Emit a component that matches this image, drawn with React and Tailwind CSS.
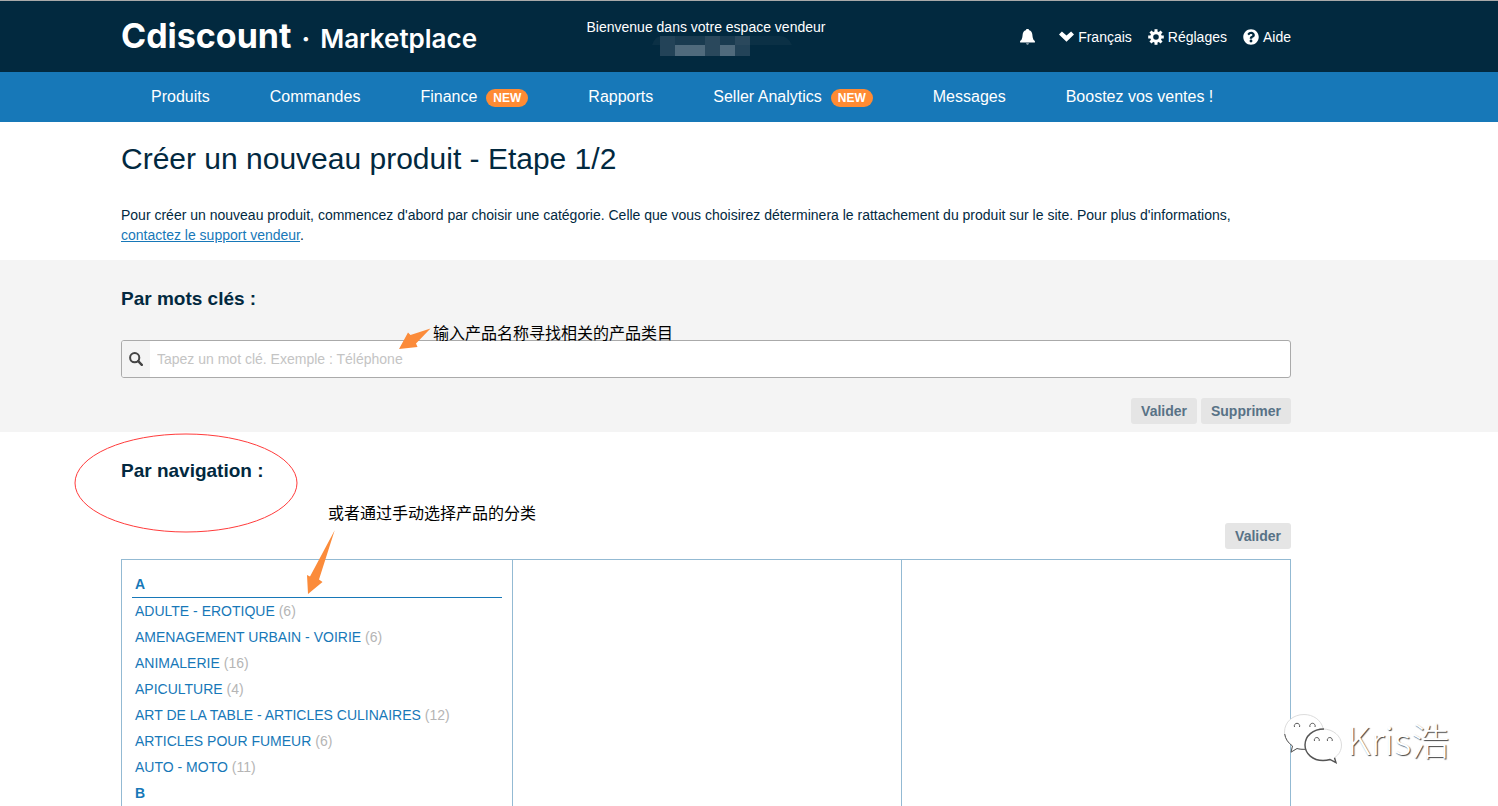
import { FaQuestionCircle } from "react-icons/fa";

//! Data
const menu = [
  { label: "Produits" },
  { label: "Commandes" },
  { label: "Finance", isNew: true },
  { label: "Rapports" },
  { label: "Seller Analytics", isNew: true },
  { label: "Messages" },
  { label: "Boostez vos ventes !" },
];

const categories = [
  {
    letter: "A",
    items: [
      ["ADULTE - EROTIQUE", 6],
      ["AMENAGEMENT URBAIN - VOIRIE", 6],
      ["ANIMALERIE", 16],
      ["APICULTURE", 4],
      ["ART DE LA TABLE - ARTICLES CULINAIRES", 12],
      ["ARTICLES POUR FUMEUR", 6],
      ["AUTO - MOTO", 11],
    ],
  },
  { letter: "B", items: [] },
];

//! Icons
const BellIcon = () => (
  <svg viewBox="0 0 15 16" className="w-[15px] h-4" fill="currentColor">
    <path d="M7.500 0c1 0 1.500.5 1.700 1.200 1.900.6 2.900 2.100 3.100 4.100.3 2.600.5 4 1.200 5.400.4.600 1.100 1 1.400 1.300V13.500H.1V12c.3-.3 1-.7 1.400-1.300.7-1.400.9-2.800 1.200-5.400.2-2 1.200-3.500 3.100-4.100C6 .5 6.500 0 7.500 0z" />
    <path d="M6 14.600h3c-.3.700-.8 1-1.500 1s-1.200-.3-1.500-1z" />
  </svg>
);

const ChevronIcon = () => (
  <svg viewBox="0 0 15 11" className="w-[15px] h-[11px]" fill="currentColor">
    <path d="M0 3.400 2.900.5l4.600 4.100L12.100.5 15 3.400l-7.500 7.400z" />
  </svg>
);

const GearIcon = () => (
  <svg viewBox="0 0 16 16" className="size-4">
    <circle cx="8" cy="8" r="4.300" fill="none" stroke="currentColor" strokeWidth="3" />
    <g fill="currentColor">
      {[0, 45, 90, 135, 180, 225, 270, 315].map((angle) => (
        <path key={angle} d="M6.500 3.500V.2h3v3.300z" transform={`rotate(${angle} 8 8)`} />
      ))}
    </g>
  </svg>
);

const SearchIcon = () => (
  <svg viewBox="0 0 14 14" className="size-[14px]" fill="none" stroke="currentColor">
    <circle cx="5.700" cy="5.700" r="4.600" strokeWidth="2" />
    <path d="m9.200 9.200 3.600 3.600" strokeWidth="2.400" strokeLinecap="round" />
  </svg>
);

// Blurred out shop name
const HiddenName = () => (
  <svg viewBox="0 0 140 20" className="w-[140px] h-5" aria-hidden="true">
    <path d="M0 9Q3 0 10 0h118q8 0 12 9z" fill="#0b3045" />
    <path d="M8 0h90v20H8z" fill="#234358" />
    <path d="M23 9h30v11H23zM68 9h15v11H68z" fill="#506a7c" />
    <path d="M53 0h15v20H53zM83 0h15v9H83z" fill="#2a485c" />
    <path d="M23 0h30v9H23zM68 0h15v9H68z" fill="#1a3b50" />
  </svg>
);

const WechatIcon = () => (
  <svg viewBox="0 0 60 52" className="w-[60px] h-[52px] shrink-0">
    <g fill="none" stroke="#555" strokeWidth="1">
      <path d="M21 1.500C10 1.500 1.500 9 1.500 19c0 6 3 10.500 8 14l-1.500 6 6-3.500c3 .8 6 1 9 .5M40 15C38 7 30 1.500 21 1.500" fill="white" stroke="#ddd" />
      <path d="M1.700 21c.7 5 3.600 9 7.800 12L8 39.200l6-3.700c2.500.7 5 1 8.500.8" />
      <path d="M40 16c-10 0-18 7-18 16s8 15.500 18 15.500c2.500 0 5-.4 7-1l6 3.200-1.500-5c4.500-3 7-7.500 7-12.700C58.500 23 50 16 40 16z" fill="white" stroke="#ddd" />
      <path d="M41 16c-11 0-19 7-19 16s8 15.500 18 15.500c2.500 0 5-.4 7-1l6 3.200-1.500-5" strokeWidth="1.400" />
      <path d="M11.500 14a2.700 2.700 0 1 1 5 0M27 14a2.700 2.700 0 1 1 5 0M31.500 28a2.500 2.500 0 1 1 4.600 0M44.500 28a2.500 2.500 0 1 1 4.600 0" />
    </g>
  </svg>
);

//! Shared pieces
const Container = ({ className = "", children }) => (
  <div className={`ml-[121px] mr-8 max-w-[1170px] ${className}`}>{children}</div>
);

const ActionButton = ({ children }) => (
  <button
    type="button"
    className="h-[26px] px-[10px] rounded-[3px] bg-[#e5e5e5] text-sm font-bold text-[#587286]"
  >
    {children}
  </button>
);

const Note = ({ className, children }) => (
  <p
    className={`absolute whitespace-nowrap font-['Noto_Sans_CJK_SC',sans-serif] text-base leading-5 text-black ${className}`}
  >
    {children}
  </p>
);

//! Top bar with the logo and the account links
const Header = () => (
  <header className="bg-[#02293f] border-t border-[#a9a9a9] text-white">
    <Container className="grid grid-cols-[1fr_auto_1fr] h-[71px]">
      <a
        href="#accueil"
        className="flex items-baseline pt-[11px] font-['Inter',sans-serif] whitespace-nowrap"
      >
        <span className="text-[34px] leading-[48px] font-bold">Cdiscount</span>
        <span className="mx-[10px] text-[26px] font-bold">·</span>
        <span className="text-[26px] font-semibold">Marketplace</span>
      </a>
      <div className="flex flex-col items-center pt-4 text-sm">
        <p>Bienvenue dans votre espace vendeur</p>
        <div className="-mt-px pl-8">
          <HiddenName />
        </div>
      </div>
      <div className="flex justify-end items-center gap-4 text-sm">
        <button type="button" aria-label="Notifications" className="mr-2">
          <BellIcon />
        </button>
        <button type="button" className="flex items-center gap-1">
          <ChevronIcon />
          Français
        </button>
        <a href="#reglages" className="flex items-center gap-1">
          <GearIcon />
          Réglages
        </a>
        <a href="#aide" className="flex items-center gap-1">
          <FaQuestionCircle className="size-4" />
          Aide
        </a>
      </div>
    </Container>
  </header>
);

const Menu = () => (
  <nav className="bg-[#1778b8] text-white">
    <Container className="flex items-center h-[50px] pl-[30px] gap-[60px] whitespace-nowrap">
      {menu.map(({ label, isNew }) => (
        <a key={label} href="#menu" className="flex items-center gap-[9px] text-base">
          {label}
          {isNew && (
            <span className="h-[18px] w-[42px] mt-[2px] rounded-full bg-[#ff8b33] text-center text-xs leading-[18px] font-bold">
              NEW
            </span>
          )}
        </a>
      ))}
    </Container>
  </nav>
);

//! Search by keyword
const KeywordSearch = () => (
  <section className="bg-[#f4f4f4]">
    <Container className="relative pt-[26px] pb-2">
      <h2 className="text-[19px] leading-[26px] font-bold">
        <label htmlFor="keyword">Par mots clés :</label>
      </h2>
      <div className="flex mt-7 h-[38px] border border-[#aaa] rounded-[3px] overflow-hidden bg-white">
        <span className="flex w-7 items-center justify-center bg-[#f4f4f4] text-[#444]">
          <SearchIcon />
        </span>
        <input
          id="keyword"
          type="text"
          placeholder="Tapez un mot clé. Exemple : Téléphone"
          className="flex-1 px-[7px] text-sm outline-none placeholder:text-[#c4c4c4]"
        />
      </div>
      <div className="flex justify-end gap-1 mt-5">
        <ActionButton>Valider</ActionButton>
        <ActionButton>Supprimer</ActionButton>
      </div>
      <svg
        viewBox="0 0 32 22"
        className="absolute left-[278px] top-[68px] w-8 h-[22px]"
        fill="#fb8b3a"
      >
        <path d="M31.500.5 11.500 7 9 4.500 0 21l18.500-2-1.500-3.500z" />
      </svg>
      <Note className="left-[312px] top-[62px]">输入产品名称寻找相关的产品类目</Note>
    </Container>
  </section>
);

//! Search by category tree
const CategoryList = () => (
  <div className="px-[10px] pt-[11px]">
    {categories.map(({ letter, items }) => (
      <div key={letter}>
        <h3 className="pl-[3px] border-b border-[#1778b8] text-sm leading-[26px] font-bold text-[#1778b8]">
          {letter}
        </h3>
        <ul>
          {items.map(([name, count]) => (
            <li key={name} className="pl-[3px] text-sm leading-[26px] text-[#b5b5b5]">
              <a href="#categorie" className="text-[#1778b8]">
                {name}
              </a>{" "}
              ({count})
            </li>
          ))}
        </ul>
      </div>
    ))}
  </div>
);

const Navigation = () => (
  <section className="flex-1 flex flex-col">
    <Container className="relative flex-1 w-full flex flex-col pt-[26px]">
      <h2 className="text-[19px] leading-[26px] font-bold">Par navigation :</h2>
      <div className="flex justify-end mt-[39px]">
        <ActionButton>Valider</ActionButton>
      </div>
      <div className="flex-1 grid grid-cols-[391fr_389fr_388fr] mt-[10px] border border-b-0 border-[#93bad3] divide-x divide-[#93bad3]">
        <CategoryList />
        <div />
        <div />
      </div>
      <svg
        viewBox="0 0 224 100"
        className="absolute -left-[47px] top-px w-[224px] h-[100px]"
        fill="none"
      >
        <ellipse cx="112" cy="50" rx="111" ry="49" stroke="#ff3b3b" />
      </svg>
      <Note className="left-[207px] top-[70px]">或者通过手动选择产品的分类</Note>
      <svg
        viewBox="0 0 28 64"
        className="absolute left-[186px] top-[98px] w-7 h-16"
        fill="#fb8b3a"
      >
        <path d="M27.700.3 3 46.500 0 45l1 19 14.500-12-3.500-2.500z" />
      </svg>
      <div className="absolute left-[1162px] bottom-[42px] flex items-center gap-1 whitespace-nowrap">
        <WechatIcon />
        <span className="font-['Noto_Sans_CJK_SC',sans-serif] font-light text-[38px] leading-[52px] text-white [text-shadow:1px_1px_1px_#444]">
          Kris浩
        </span>
      </div>
    </Container>
  </section>
);

//! Main ui
const App = () => {
  return (
    <div className="min-h-screen flex flex-col bg-white font-['Liberation_Sans',Arial,sans-serif] text-[#02293f]">
      <Header />
      <Menu />
      <main className="flex-1 flex flex-col">
        <Container className="pt-[19px] pb-[15px]">
          <h1 className="text-[30px] leading-9">Créer un nouveau produit - Etape 1/2</h1>
          <p className="mt-7 text-sm">
            Pour créer un nouveau produit, commencez d'abord par choisir une catégorie. Celle que
            vous choisirez déterminera le rattachement du produit sur le site. Pour plus
            d'informations,{" "}
            <a href="#support" className="text-[#1778b8] underline">
              contactez le support vendeur
            </a>
            .
          </p>
        </Container>
        <KeywordSearch />
        <Navigation />
      </main>
    </div>
  );
};

export default App;
